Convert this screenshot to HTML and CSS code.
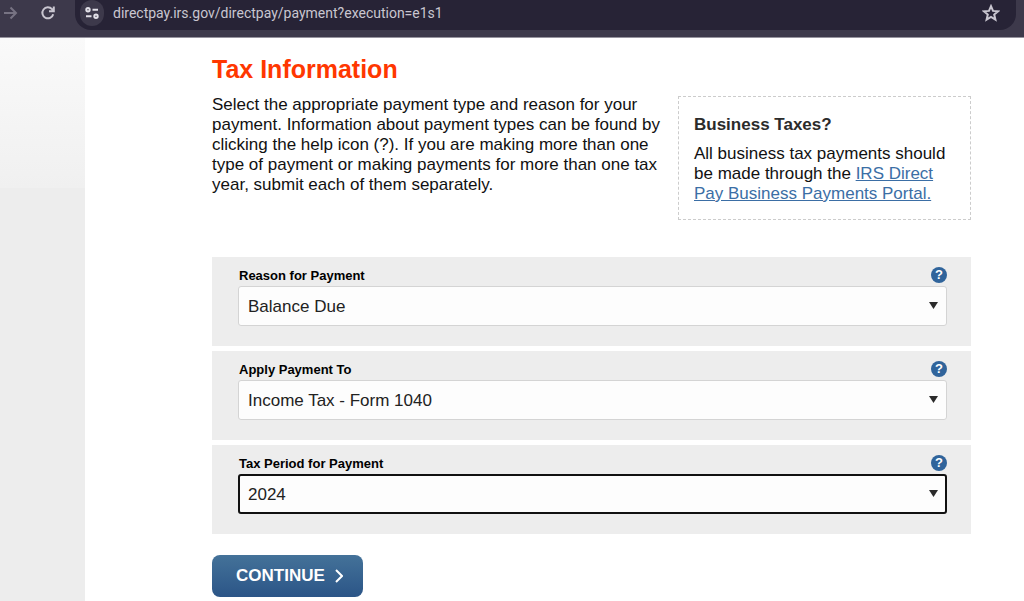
FILE: index.html
```html
<!DOCTYPE html>
<html lang="en">
<head>
  <meta charset="utf-8">
  <title>Tax Information</title>
  <link rel="stylesheet" href="styles.css">
</head>
<body>

<header class="toolbar">
  <button class="tool forward" type="button" aria-label="Forward" disabled>
    <svg width="16" height="16" viewBox="0 0 16 16"><path d="M2 8h12M8.500 2.500L14 8l-5.500 5.500"/></svg>
  </button>
  <button class="tool reload" type="button" aria-label="Reload">
    <svg width="16" height="16" viewBox="0 0 16 16"><path d="M13.200 9.200A5.500 5.500 0 1 1 12 4.200L13.500 6M13.800 1.500V6.300H9"/></svg>
  </button>
  <div class="address">
    <button class="site-info" type="button" aria-label="Site information">
      <svg width="14" height="14" viewBox="0 0 14 14"><circle cx="3" cy="3.800" r="1.700"/><path d="M7.500 3.800H13M1 10.200H6.500"/><circle cx="11" cy="10.200" r="1.700"/></svg>
    </button>
    <input class="url" type="text" aria-label="Address" value="directpay.irs.gov/directpay/payment?execution=e1s1">
    <button class="star" type="button" aria-label="Bookmark">
      <svg width="18" height="18" viewBox="0 0 18 18"><path d="M9 2.200l2 4.700 5 .4-3.800 3.300 1.200 5L9 12.900l-4.400 2.700 1.200-5L2 7.300l5-.4z"/></svg>
    </button>
  </div>
</header>

<div class="page">
  <div class="side"></div>

  <main class="content">
    <h1>Tax Information</h1>

    <div class="intro">
      <p class="intro-text">Select the appropriate payment type and reason for your payment. Information about payment types can be found by clicking the help icon (?). If you are making more than one type of payment or making payments for more than one tax year, submit each of them separately.</p>
      <aside class="business">
        <h2>Business Taxes?</h2>
        <p>All business tax payments should be made through the <a href="#">IRS Direct Pay Business Payments Portal.</a></p>
      </aside>
    </div>

    <form>
      <div class="field">
        <div class="field-head">
          <label for="reason">Reason for Payment</label>
          <button class="help" type="button" aria-label="Help with reason for payment">?</button>
        </div>
        <div class="select">
          <select id="reason"><option>Balance Due</option></select>
        </div>
      </div>

      <div class="field">
        <div class="field-head">
          <label for="applyTo">Apply Payment To</label>
          <button class="help" type="button" aria-label="Help with apply payment to">?</button>
        </div>
        <div class="select">
          <select id="applyTo"><option>Income Tax - Form 1040</option></select>
        </div>
      </div>

      <div class="field">
        <div class="field-head">
          <label for="period">Tax Period for Payment</label>
          <button class="help" type="button" aria-label="Help with tax period">?</button>
        </div>
        <div class="select active">
          <select id="period"><option>2024</option></select>
        </div>
      </div>

      <button class="continue" type="button">CONTINUE
        <svg width="8" height="14" viewBox="0 0 8 14"><path d="M1 1l6 6-6 6"/></svg>
      </button>
    </form>
  </main>
</div>

</body>
</html>
```
FILE: styles.css
```css
* {
  box-sizing: border-box;
}
body {
  display: flex;
  flex-direction: column;
  min-height: 100vh;
  margin: 0;
  font: 17px/20px "Liberation Sans", Arial, sans-serif;
  color: #111;
  background: #fff;
}
h1, h2, p {
  margin: 0;
}
button {
  padding: 0;
  border: 0;
  background: none;
  color: inherit;
  font-family: inherit;
}
svg {
  display: block;
  fill: none;
  stroke: currentColor;
  stroke-width: 2;
}

/* browser bar */
.toolbar {
  display: flex;
  align-items: flex-start;
  padding: 0 8px 7px 0;
  border-bottom: 1px solid #96939e;
  background: #3d394b;
  color: #c9c6d0;
}
.tool {
  height: 26px;
}
.forward {
  margin-left: 2px;
  color: #777383;
}
.reload {
  margin: 0 19px 0 22px;
}
.address {
  display: flex;
  flex: 1;
  align-items: flex-start;
  height: 30px;
  padding: 0 16px 0 5px;
  border-radius: 0 0 16px 16px;
  background: #272336;
}
.site-info {
  display: flex;
  align-items: center;
  justify-content: center;
  width: 24px;
  height: 26px;
  border-radius: 12px;
  background: #3d394b;
  color: #e2e0e8;
}
.url {
  flex: 1;
  height: 26px;
  margin-left: 9px;
  padding: 0;
  border: 0;
  outline: 0;
  background: none;
  color: #c9c6d0;
  font: 14px/26px Roboto, sans-serif;
}
.star {
  height: 26px;
}

/* page */
.page {
  display: flex;
  flex: 1;
}
.side {
  width: 85px;
  background: linear-gradient(#fafafa, #f0f0f0) 0 0 / 100% 150px no-repeat #ededed;
}
.content {
  flex: 1;
  padding: 16px 53px 4px 127px;
}
h1 {
  color: #ff3700;
  font-size: 25px;
  line-height: 30px;
}
.intro {
  display: flex;
  gap: 12px;
  margin-top: 11px;
}
.intro-text {
  flex: 1;
}
.business {
  width: 293px;
  margin-top: 1px;
  padding: 18px 15px 15px;
  border: 1px dashed #ccc;
}
.business h2 {
  margin-bottom: 9px;
  color: #2b2b2b;
  font-size: 17px;
  line-height: 20px;
}
.business a {
  color: #3b6ea5;
}

form {
  margin-top: 37px;
}
.field {
  margin-bottom: 5px;
  padding: 9px 24px 20px 26px;
  background: #ededed;
}
.field-head {
  display: flex;
  align-items: flex-start;
  justify-content: space-between;
  height: 20px;
}
label {
  padding-left: 1px;
  color: #000;
  font-size: 13px;
  font-weight: bold;
}
.help {
  margin-top: 1px;
  width: 16px;
  height: 16px;
  border-radius: 50%;
  background: #30649b;
  color: #fff;
  font-size: 13px;
  font-weight: bold;
  line-height: 16px;
}
.select {
  position: relative;
}
.select::after {
  content: "";
  position: absolute;
  top: 16px;
  right: 9px;
  width: 9px;
  height: 7px;
  background: #2b2b2b;
  clip-path: polygon(0 0, 100% 0, 50% 100%);
  pointer-events: none;
}
select {
  display: block;
  width: 100%;
  height: 40px;
  padding: 2px 28px 0 9px;
  border: 1px solid #d4d4d4;
  border-radius: 3px;
  appearance: none;
  background: #fdfdfd;
  color: #222;
  font: inherit;
}
.active select {
  padding-left: 8px;
  border: 2px solid #111;
}
.continue {
  display: flex;
  align-items: center;
  gap: 10px;
  height: 42px;
  margin-top: 21px;
  padding: 0 20px 0 24px;
  border-radius: 8px;
  background: linear-gradient(#447299, #2b5587);
  color: #fff;
  font-size: 17px;
  font-weight: bold;
}
```
